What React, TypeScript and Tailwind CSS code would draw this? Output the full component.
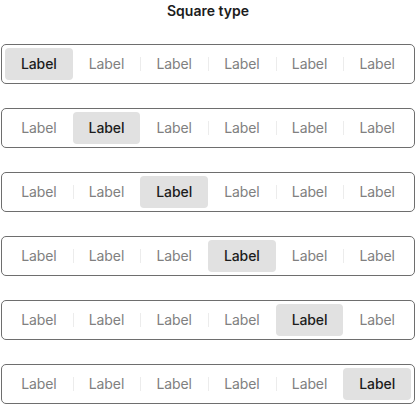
import React from 'react';

const labels = ['Label', 'Label', 'Label', 'Label', 'Label', 'Label'];

const SegmentRow = ({ active }: { active: number }) => {
  return (
    <div className="mx-[1px] h-[40px] flex items-stretch p-[3px] rounded-[5px] border border-[#6e6e6e] bg-white">
      {labels.map((label, i) => {
        const isActive = i === active;
        // separator sits on the left edge, hidden next to the active item
        const showSep = i > 0 && i !== active && i - 1 !== active;
        return (
          <div key={i} className="relative flex-1 flex">
            {showSep && (
              <span className="absolute left-0 top-1/2 -translate-y-1/2 w-px h-[14px] bg-[#ececec]" />
            )}
            <button
              className={`flex-1 flex items-center justify-center rounded-[4px] text-[14px] leading-none tracking-[-0.1px] ${
                isActive ? 'bg-[#e1e1e1] text-[#1c1c1c] font-medium' : 'text-[#808080] font-normal'
              }`}
            >
              {label}
            </button>
          </div>
        );
      })}
    </div>
  );
};

export default function App() {
  return (
    <div className="w-[416px] h-[404px] bg-white" style={{ fontFamily: 'Inter, "Noto Sans", sans-serif' }}>
      <h2 className="pt-[2px] h-[44px] text-center text-[14px] leading-[18px] font-semibold text-[#1c1c1c]">Square type</h2>
      <div className="flex flex-col gap-[24px]">
        {[0, 1, 2, 3, 4, 5].map((a) => (
          <SegmentRow key={a} active={a} />
        ))}
      </div>
    </div>
  );
}
